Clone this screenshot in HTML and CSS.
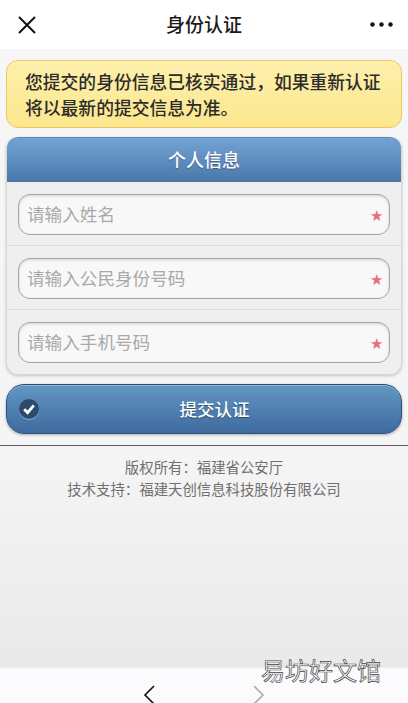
FILE: index.html
```html
<!DOCTYPE html>
<html lang="zh-CN">
<head>
<meta charset="utf-8">
<title>身份认证</title>
<link rel="stylesheet" href="styles.css">
</head>
<body>
<div class="app">
  <header class="topbar">
    <svg class="close" viewBox="0 0 18 18" width="18" height="18"><path d="M1 1 L17 17 M17 1 L1 17" stroke="#111" stroke-width="2" fill="none"/></svg>
    <h1 class="title">身份认证</h1>
    <svg class="more" viewBox="0 0 23 5" width="23" height="5"><circle cx="2.5" cy="2.5" r="2.2"/><circle cx="11.5" cy="2.5" r="2.2"/><circle cx="20.5" cy="2.5" r="2.2"/></svg>
  </header>
  <main class="content">
    <div class="notice">您提交的身份信息已核实通过，如果重新认证将以最新的提交信息为准。</div>
    <section class="panel">
      <div class="panel-head">个人信息</div>
      <div class="row"><div class="field"><span class="ph">请输入姓名</span><span class="req">★</span></div></div>
      <div class="row"><div class="field"><span class="ph">请输入公民身份号码</span><span class="req">★</span></div></div>
      <div class="row"><div class="field"><span class="ph">请输入手机号码</span><span class="req">★</span></div></div>
    </section>
    <button class="submit" type="button">
      <span class="check"><svg viewBox="0 0 14 14" width="14" height="14"><path d="M2.2 7.2 L5.6 10.6 L11.8 3.4" stroke="#fff" stroke-width="2.8" fill="none"/></svg></span>
      提交认证
    </button>
    <footer class="copy">
      <p>版权所有：福建省公安厅</p>
      <p>技术支持：福建天创信息科技股份有限公司</p>
    </footer>
  </main>
  <nav class="navbar">
    <svg viewBox="0 0 12 20" width="12" height="20"><path d="M11 1 L2 10 L11 19" stroke="#111" stroke-width="1.6" fill="none"/></svg>
    <svg viewBox="0 0 12 20" width="12" height="20"><path d="M1 1 L10 10 L1 19" stroke="#aaa" stroke-width="1.6" fill="none"/></svg>
  </nav>
  <div class="watermark">易坊好文馆</div>
</div>
</body>
</html>
```
FILE: styles.css
```css
* { box-sizing: border-box; }
html, body { margin: 0; padding: 0; }
body { font-family: "Noto Sans CJK SC", "Liberation Sans", sans-serif; }
.app { position: relative; width: 408px; height: 703px; overflow: hidden; display: flex; flex-direction: column; background: #f4f4f4; }
.topbar { height: 49px; flex: none; background: #fff; display: flex; align-items: center; justify-content: space-between; padding: 0 15px 0 18px; position: relative; }
.title { position: absolute; left: 0; right: 0; top: 10px; margin: 0; text-align: center; font-size: 19px; line-height: 28px; font-weight: 500; color: #1a1a1a; }
.more { fill: #111; }
.content { flex: 1; padding: 11px 6px 0; background: linear-gradient(#f6f6f6 0, #f5f5f5 400px, #e9e9e9 618px); }
.notice { height: 68px; padding: 7px 10px 0 18px; border: 1px solid #f0c661; border-radius: 12px; background: linear-gradient(#fdf0ac, #fbe78d); color: #2b2b2b; font-size: 17.8px; line-height: 26px; font-weight: 500; }
.panel { margin-top: 9px; border: 1px solid #d8d8d8; border-top: 0; border-radius: 12px; background: #efefef; box-shadow: 0 1px 3px rgba(0,0,0,.2); overflow: hidden; }
.panel-head { height: 45px; margin: 0 -1px; background: linear-gradient(#72a3d3, #4c78ac); border: 1px solid #5d87b4; border-bottom: 1px solid #4a74a6; border-radius: 12px 12px 0 0; text-align: center; color: #fff; font-size: 18px; line-height: 43px; font-weight: 500; text-shadow: 0 1px 1px rgba(0,0,0,.3); }
.row { height: 64px; padding: 12px 11px 0; border-bottom: 1px solid #dcdcdc; }
.row:last-child { border-bottom: 0; }
.field { height: 41px; display: flex; align-items: center; justify-content: space-between; padding: 0 6px 0 8px; border: 1px solid #a5a5a5; border-radius: 12px; background: #f8f8f8; box-shadow: inset 0 1px 3px rgba(0,0,0,.16); }
.ph { font-size: 17.6px; color: #a9a9a9; position: relative; top: -1px; }
.req { font-size: 12.5px; color: #e8707c; }
.submit { position: relative; display: block; width: 396px; height: 50px; margin-top: 9px; padding: 0; border: 1px solid #2a5078; border-radius: 18px; background: linear-gradient(#6297c3, #3f6a9f); box-shadow: 0 1px 3px rgba(0,0,0,.3), inset 0 1px 0 rgba(255,255,255,.3); color: #fff; font: 500 17.5px/46px "Noto Sans CJK SC", sans-serif; text-shadow: 0 1px 1px rgba(0,0,0,.4); text-align: center; text-indent: 21px; }
.check { position: absolute; left: 12px; top: 14px; width: 20px; height: 20px; border-radius: 50%; background: #2b4a6e; box-shadow: 0 1px 0 rgba(255,255,255,.4); display: flex; align-items: center; justify-content: center; text-indent: 0; }
.copy { margin: 11px -6px 0; border-top: 1px solid #5e5e5e; padding-top: 10px; text-align: center; color: #6f6f6f; font-size: 14.4px; line-height: 22px; }
.copy p { margin: 0; }
.navbar { height: 36px; flex: none; background: #fbfbfd; border-top: 1px solid #eee; display: flex; justify-content: center; gap: 98px; padding-top: 17px; }
.watermark { position: absolute; left: 261px; top: 654px; font-size: 24px; line-height: 32px; color: #fff; -webkit-text-stroke: 0.7px #444; white-space: nowrap; }
```
